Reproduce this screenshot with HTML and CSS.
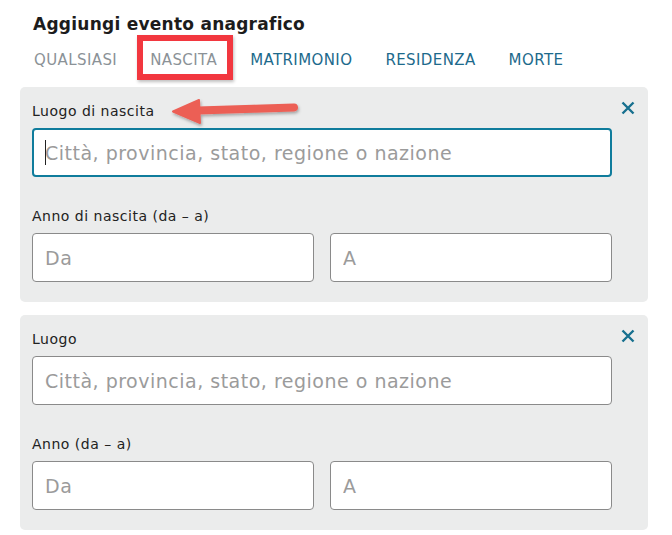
FILE: index.html
```html
<!DOCTYPE html>
<html lang="it">
<head>
    <meta charset="UTF-8">
    <meta name="viewport" content="width=device-width, initial-scale=1.0">
    <title>Aggiungi evento anagrafico</title>
    <link rel="stylesheet" href="styles.css">
</head>
<body>
    <div class="wrap">
        <h1 class="title">Aggiungi evento anagrafico</h1>

        <div class="tabs">
            <span class="tab muted">QUALSIASI</span>
            <span class="tab muted marked">NASCITA</span>
            <span class="tab">MATRIMONIO</span>
            <span class="tab">RESIDENZA</span>
            <span class="tab">MORTE</span>
        </div>

        <div class="panel">
            <button class="close" aria-label="Chiudi">
                <svg width="14" height="14" viewBox="0 0 14 14"><path d="M1.5 1.5 L12.5 12.5 M12.5 1.5 L1.5 12.5" stroke="currentColor" stroke-width="2.4" fill="none"/></svg>
            </button>
            <svg class="arrow" width="132" height="34" viewBox="0 0 132 34">
                <defs>
                    <filter id="sh" x="-10%" y="-30%" width="130%" height="180%">
                        <feDropShadow dx="1" dy="2" stdDeviation="1.5" flood-color="#000" flood-opacity="0.3"/>
                    </filter>
                </defs>
                <g filter="url(#sh)">
                    <path d="M124 12.5 L28 15.5" stroke="#ec5f55" stroke-width="8" stroke-linecap="round" fill="none"/>
                    <path d="M3 16.5 L29 5 L30 28 Z" fill="#ec5f55" stroke="#ec5f55" stroke-width="2" stroke-linejoin="round"/>
                </g>
            </svg>

            <div class="field">
                <label class="label">Luogo di nascita</label>
                <div class="input-box">
                    <input class="input focused" type="text" placeholder="Città, provincia, stato, regione o nazione">
                    <span class="caret"></span>
                </div>
            </div>
            <div class="field">
                <label class="label">Anno di nascita (da – a)</label>
                <div class="range">
                    <input class="input" type="text" placeholder="Da">
                    <input class="input" type="text" placeholder="A">
                </div>
            </div>
        </div>

        <div class="panel">
            <button class="close" aria-label="Chiudi">
                <svg width="14" height="14" viewBox="0 0 14 14"><path d="M1.5 1.5 L12.5 12.5 M12.5 1.5 L1.5 12.5" stroke="currentColor" stroke-width="2.4" fill="none"/></svg>
            </button>
            <div class="field">
                <label class="label">Luogo</label>
                <input class="input" type="text" placeholder="Città, provincia, stato, regione o nazione">
            </div>
            <div class="field">
                <label class="label">Anno (da – a)</label>
                <div class="range">
                    <input class="input" type="text" placeholder="Da">
                    <input class="input" type="text" placeholder="A">
                </div>
            </div>
        </div>
    </div>
</body>
</html>
```

FILE: styles.css
```css
body {
    font-family: "DejaVu Sans", Verdana, sans-serif;
    margin: 0;
    background: #fff;
    color: #222;
}

.wrap {
    width: 628px;
    padding: 0 0 0 20px;
}

.title {
    font-size: 17px;
    font-weight: bold;
    letter-spacing: 0.25px;
    margin: 0;
    padding: 13px 0 0 13px;
    line-height: 22px;
    color: #1c1c1c;
}

.tabs {
    display: flex;
    gap: 33px;
    padding: 15px 0 0 14px;
    height: 37px;
}

.tab {
    font-size: 15px;
    letter-spacing: 0.4px;
    line-height: 20px;
    height: 20px;
    color: #1d6a8c;
    position: relative;
}

.tab.muted {
    color: #8b9297;
}

.tab.marked::after {
    content: "";
    position: absolute;
    left: -13px;
    top: -15px;
    right: -16px;
    bottom: -10px;
    border: 6px solid #f2373f;
    box-shadow: 1px 2px 3px rgba(0, 0, 0, 0.25);
}

.panel {
    position: relative;
    background: #ebecec;
    border-radius: 5px;
    padding: 15px 36px 20px 12px;
    margin-bottom: 13px;
}

.close {
    position: absolute;
    top: 14px;
    right: 13px;
    border: 0;
    background: none;
    padding: 0;
    color: #17708f;
    width: 14px;
    height: 14px;
}

.close svg {
    display: block;
}

.arrow {
    position: absolute;
    left: 150px;
    top: 8px;
}

.field + .field {
    margin-top: 30px;
}

.label {
    display: block;
    font-size: 14px;
    letter-spacing: 0.5px;
    line-height: 18px;
    margin-bottom: 8px;
    color: #222;
}

.input-box {
    position: relative;
}

.input {
    display: block;
    box-sizing: border-box;
    width: 100%;
    height: 49px;
    border: 1px solid #8a8a8a;
    border-radius: 4px;
    background: #fff;
    padding: 0 12px;
    font-family: "DejaVu Sans", Verdana, sans-serif;
    font-size: 19px;
    letter-spacing: 0.5px;
    color: #222;
    outline: none;
}

.input::placeholder {
    color: #9b9b9b;
}

.input.focused {
    border: 2px solid #0f7c9c;
    padding: 0 11px;
}

.caret {
    position: absolute;
    left: 13px;
    top: 12px;
    width: 1px;
    height: 25px;
    background: #222;
}

.range {
    display: flex;
    gap: 16px;
}

.range .input {
    flex: 1;
}
```
